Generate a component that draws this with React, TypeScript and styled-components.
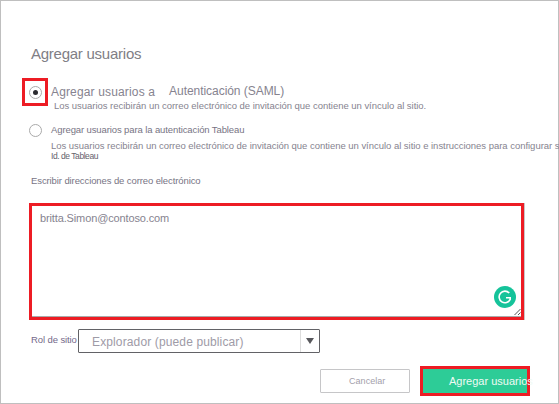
import React from "react";
import styled, { createGlobalStyle } from "styled-components";

const GlobalStyle = createGlobalStyle`
  *, *::before, *::after { box-sizing: border-box; }
  body { margin: 0; background: #fff; overflow: hidden; }
`;

const Dialog = styled.main`
  display: flex;
  flex-direction: column;
  width: 559px;
  height: 404px;
  padding: 43px 0 0 21px;
  border: 1px solid #bfbfbf;
  background: #fff;
  font-family: "Liberation Sans", Arial, sans-serif;
  color: #86838f;
`;

const Line = styled.span<{ $size: number; $track?: number; $height?: number; $color?: string }>`
  display: block;
  white-space: nowrap;
  font-size: ${(p) => p.$size}px;
  letter-spacing: ${(p) => p.$track ?? 0}px;
  line-height: ${(p) => p.$height ?? 12}px;
  color: ${(p) => p.$color ?? "inherit"};
`;

const Title = styled.h1`
  margin: 0 0 14px 9px;
  font-size: 15px;
  font-weight: 400;
  line-height: 20px;
  letter-spacing: -0.25px;
  color: #807e85;
`;

const Option = styled.section`
  display: flex;
  align-items: flex-start;
  height: 43px;
`;

const RadioFrame = styled.div<{ $marked?: boolean }>`
  display: grid;
  place-items: center;
  flex: none;
  width: 26px;
  height: ${(p) => (p.$marked ? 28 : 19)}px;
  border: 3px solid ${(p) => (p.$marked ? "#ed1c24" : "transparent")};
`;

const Radio = styled.span<{ $checked?: boolean }>`
  display: grid;
  place-items: center;
  width: 13px;
  height: 13px;
  border: 1px solid #aaa;
  border-radius: 50%;

  &::after {
    content: "";
    width: 5px;
    height: 5px;
    border-radius: 50%;
    background: ${(p) => (p.$checked ? "#2b2b2f" : "transparent")};
  }
`;

const OptionText = styled.div<{ $top: number }>`
  padding: ${(p) => p.$top}px 0 0 3px;
`;

const Heading = styled.div`
  display: flex;
  gap: 14px;
  height: 14px;
`;

const Raised = styled.div`
  margin-top: -1px;
`;

const Indent = styled.div`
  padding-left: 3px;
`;

const FieldLabel = styled.div`
  margin: 11px 0 16px 9px;
`;

const AddressBox = styled.div`
  display: flex;
  justify-content: space-between;
  width: 495px;
  height: 117px;
  margin-left: 7px;
  padding: 4px 0 0 8px;
  border: 3px solid #ed1c24;
  box-shadow: inset 0 -1px 0 #aaa, 1px 0 0 #c8c8c8;
`;

const Tools = styled.div`
  display: flex;
  flex-direction: column;
  align-self: flex-end;
  width: 27px;
  padding-bottom: 1px;

  svg { display: block; }
`;

const RoleRow = styled.div`
  display: flex;
  margin: 9px 0 0 9px;
  height: 24px;
`;

const RoleLabel = styled.div`
  width: 47px;
  padding-top: 5px;
`;

const Select = styled.div`
  display: flex;
  justify-content: space-between;
  width: 242px;
  height: 24px;
  padding-left: 13px;
  border: 1px solid #626266;
  border-radius: 1px;
`;

const Arrow = styled.div`
  display: grid;
  place-items: center;
  width: 19px;
  border-left: 1px solid #ddd;
`;

const Actions = styled.footer`
  display: flex;
  gap: 10px;
  margin: 13px 0 0 298px;
`;

const Cancel = styled.button`
  width: 90px;
  height: 24px;
  margin-top: 3px;
  padding: 0 0 0 28px;
  border: 1px solid #c6c6c8;
  border-radius: 1px;
  background: #fff;
  font-family: inherit;
  text-align: left;
`;

const Submit = styled.button`
  width: 110px;
  height: 30px;
  padding: 0 0 0 26px;
  border: 3px solid #ed1c24;
  background: #2dcc97;
  font-family: inherit;
  text-align: left;
`;

export default function App() {
  return (
    <>
      <GlobalStyle />
      <Dialog>
        <Title>Agregar usuarios</Title>
        <Option>
          <RadioFrame $marked><Radio $checked /></RadioFrame>
          <OptionText $top={6}>
            <Heading>
              <Line $size={12} $track={0.15} $height={16}>Agregar usuarios a</Line>
              <Raised><Line $size={12} $track={-0.05} $height={16}>Autenticación (SAML)</Line></Raised>
            </Heading>
            <Indent>
              <Line $size={9.5} $track={-0.03} $height={16}>
                Los usuarios recibirán un correo electrónico de invitación que contiene un vínculo al sitio.
              </Line>
            </Indent>
          </OptionText>
        </Option>
        <Option>
          <RadioFrame><Radio /></RadioFrame>
          <OptionText $top={1}>
            <Line $size={9.5} $track={-0.11} $height={16} $color="#777484">
              Agregar usuarios para la autenticación Tableau
            </Line>
            <Line $size={9.5} $track={-0.03} $height={15}>
              Los usuarios recibirán un correo electrónico de invitación que contiene un vínculo al sitio e instrucciones para configurar s
            </Line>
            <Line $size={8.5} $track={-0.45} $height={7} $color="#65626d">Id. de Tableau</Line>
          </OptionText>
        </Option>
        <FieldLabel>
          <Line $size={9.5} $track={-0.1} $color="#777484">Escribir direcciones de correo electrónico</Line>
        </FieldLabel>
        <AddressBox>
          <Line $size={11} $track={-0.13} $height={16}>britta.Simon@contoso.com</Line>
          <Tools>
            <svg width="22" height="22" viewBox="0 0 22 22">
              <circle cx="11" cy="11" r="11" fill="#15c39a" />
              <path d="M15.2 7A5.8 5.8 0 1 0 16.2 13.4V11.8H12" fill="none" stroke="#fff" strokeWidth="1.6" />
            </svg>
            <svg width="27" height="8" viewBox="0 0 27 8">
              <path d="M20.5 7L26.5 1M24 7L26.5 4.5" stroke="#555" strokeWidth="1" />
            </svg>
          </Tools>
        </AddressBox>
        <RoleRow>
          <RoleLabel><Line $size={9.5} $track={-0.1} $color="#74698a">Rol de sitio</Line></RoleLabel>
          <Select>
            <Line $size={12} $track={0.13} $height={24} $color="#9e9ba7">Explorador (puede publicar)</Line>
            <Arrow>
              <svg width="8" height="6" viewBox="0 0 8 6"><path d="M0 0H8L4 6Z" fill="#58585c" /></svg>
            </Arrow>
          </Select>
        </RoleRow>
        <Actions>
          <Cancel><Line $size={9} $track={0.05} $color="#a3a0ab">Cancelar</Line></Cancel>
          <Submit><Line $size={11} $color="#f0faf4">Agregar usuarios</Line></Submit>
        </Actions>
      </Dialog>
    </>
  );
}
